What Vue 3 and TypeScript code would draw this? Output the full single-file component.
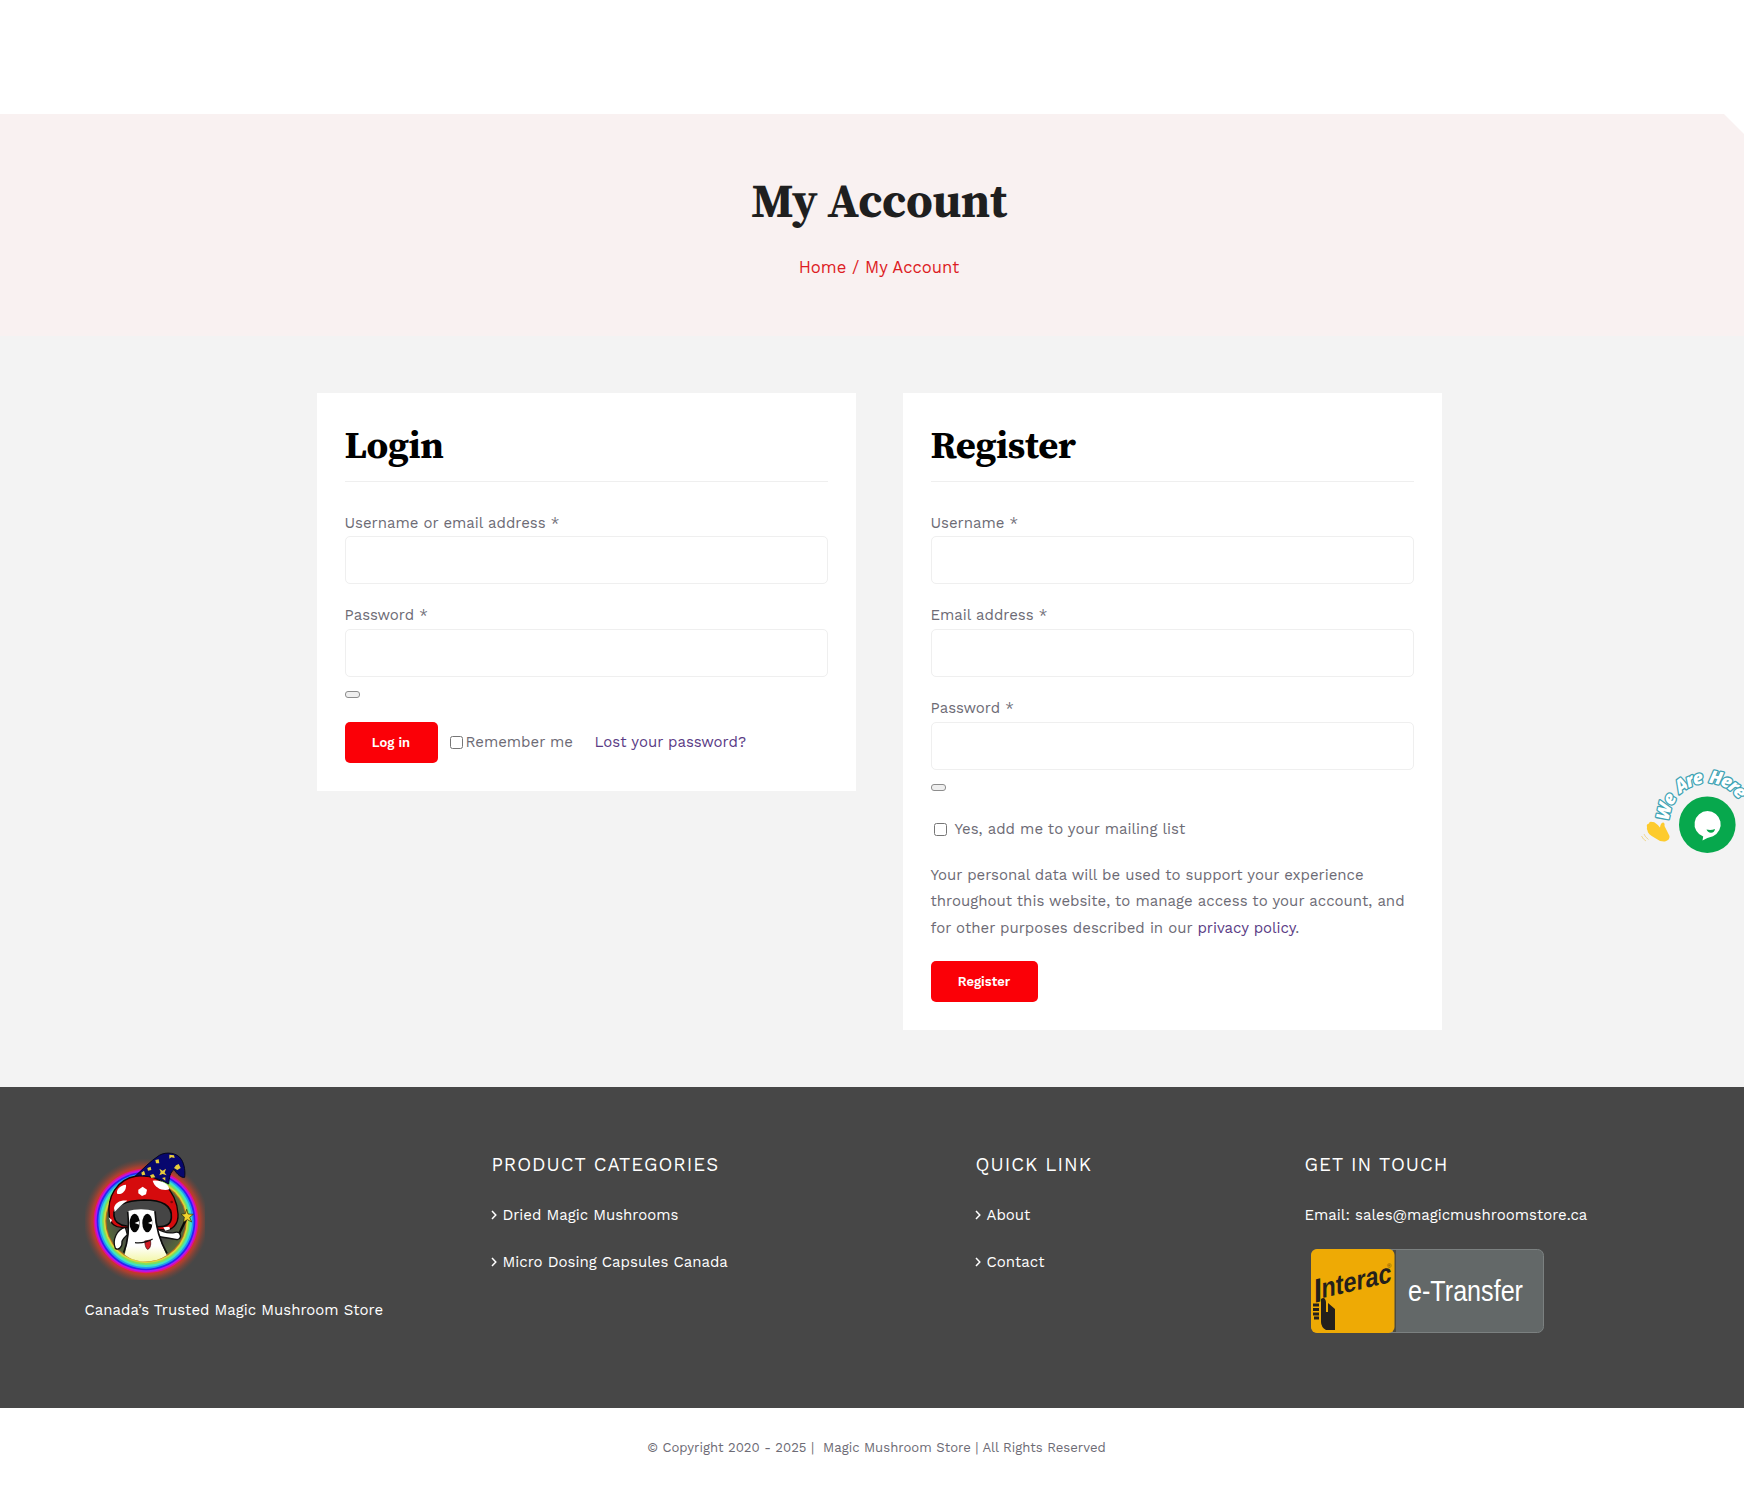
<template>
  <div class="page">
    <header class="site-header"></header>

    <section class="banner">
      <h1 class="banner-title">My Account</h1>
      <nav class="breadcrumb"><a href="#">Home</a> / <span>My Account</span></nav>
      <span class="banner-corner"></span>
    </section>

    <main class="account">
      <form class="card" @submit.prevent>
        <h2 class="card-title">Login</h2>
        <div v-for="field in loginFields" :key="field.id" class="field">
          <label :for="field.id">{{ field.label }} <span>*</span></label>
          <input :id="field.id" v-model="login[field.id]" :type="field.type" />
        </div>
        <button type="button" class="show-password" aria-label="Show password"></button>
        <div class="actions">
          <button type="submit" class="btn btn-login">Log in</button>
          <label class="remember">
            <input v-model="remember" type="checkbox" class="check" />
            <span>Remember me</span>
          </label>
          <a href="#" class="lost">Lost your password?</a>
        </div>
      </form>

      <form class="card" @submit.prevent>
        <h2 class="card-title">Register</h2>
        <div v-for="field in registerFields" :key="field.id" class="field">
          <label :for="field.id">{{ field.label }} <span>*</span></label>
          <input :id="field.id" v-model="register[field.id]" :type="field.type" />
        </div>
        <button type="button" class="show-password" aria-label="Show password"></button>
        <label class="mailing">
          <input v-model="mailing" type="checkbox" class="check" />
          <span>Yes, add me to your mailing list</span>
        </label>
        <p class="privacy">
          Your personal data will be used to support your experience<br />
          throughout this website, to manage access to your account, and<br />
          for other purposes described in our <a href="#">privacy policy</a>.
        </p>
        <button type="submit" class="btn btn-register">Register</button>
      </form>
    </main>

    <footer class="footer">
      <div class="footer-col">
        <svg class="logo" viewBox="45 30 360 390">
          <defs>
            <radialGradient id="glow">
              <stop offset="0.8" stop-color="#f0282a" />
              <stop offset="0.87" stop-color="#b8402c" stop-opacity="0.85" />
              <stop offset="1" stop-color="#7a4436" stop-opacity="0" />
            </radialGradient>
            <radialGradient id="inner">
              <stop offset="0.6" stop-color="#474747" />
              <stop offset="1" stop-color="#55683a" />
            </radialGradient>
            <linearGradient id="stem" x1="0" y1="0" x2="0" y2="1">
              <stop offset="0.7" stop-color="#ffffff" />
              <stop offset="1" stop-color="#f3f7a8" />
            </linearGradient>
          </defs>
          <circle cx="228" cy="243" r="188" fill="url(#glow)" />
          <circle v-for="ring in rings" :key="ring.r" cx="228" cy="243" :r="ring.r" :fill="ring.color" />
          <circle cx="228" cy="243" r="119" fill="url(#inner)" />
          <path d="M166 262C140 268 126 300 136 325C146 332 158 320 156 304C160 292 168 290 172 284Z" fill="#fff" stroke="#111" stroke-width="4" />
          <path d="M258 264C276 276 296 282 316 277C332 274 338 294 322 299C296 294 276 292 262 288Z" fill="#fff" stroke="#111" stroke-width="4" />
          <path d="M328 280L350 234" stroke="#080808" stroke-width="7" />
          <path d="M350 208L354 222L370 223L359 232L365 246L352 239L341 246L343 231L333 223L346 221Z" fill="#f0d52c" stroke="#2b2608" stroke-width="2" />
          <path d="M118 230C110 170 140 118 200 108C262 96 320 150 324 222C326 254 306 270 286 270C262 266 196 266 160 262C136 264 120 250 118 230Z" fill="#d50b0d" stroke="#180404" stroke-width="4" />
          <path d="M132 228C126 196 170 182 222 180C276 180 308 196 304 234C302 254 286 262 258 260L170 258C148 256 134 246 132 228Z" fill="#454545" stroke="#080808" stroke-width="5" />
          <path d="M142 162C136 150 152 134 168 134C170 150 158 164 142 162Z" fill="#fff" />
          <path d="M205 149L218 140L231 149L228 163L216 168L205 160Z" fill="#fff" />
          <path d="M248 122C270 118 296 130 298 148C278 154 254 144 248 122Z" fill="#fff" />
          <path d="M132 204C136 188 150 180 172 182C158 190 146 202 134 216Z" fill="#fff" />
          <path d="M116 232L126 240L122 248Z" fill="#fff" />
          <path d="M280 262L298 260L300 268L286 272Z" fill="#fff" />
          <circle cx="305" cy="186" r="4" fill="#7c0607" />
          <path d="M172 214C196 206 230 206 254 214C256 258 268 300 290 346C250 372 198 370 164 344C176 300 176 258 172 214Z" fill="url(#stem)" />
          <path d="M173 214C178 258 174 306 161 338M255 214C257 258 270 304 291 340" fill="none" stroke="#0c0c0c" stroke-width="5" />
          <ellipse cx="194" cy="249" rx="15" ry="28" fill="#050505" />
          <ellipse cx="232" cy="249" rx="15" ry="28" fill="#050505" />
          <path d="M194 249L208 243L208 254Z" fill="#fff" />
          <path d="M234 249L247 243L247 254Z" fill="#fff" />
          <path d="M224 303L241 300C245 318 238 328 232 328C226 322 225 314 224 303Z" fill="#d31b25" stroke="#3a0508" stroke-width="2" />
          <path d="M195 308C214 310 232 306 248 297" fill="none" stroke="#111" stroke-width="4" />
          <path d="M196 108C216 90 240 64 268 46C288 34 322 38 334 58C344 74 346 96 344 112C334 114 322 104 312 88C300 98 298 112 296 132C266 114 232 106 196 108Z" fill="#07076e" stroke="#05051c" stroke-width="3" />
          <g fill="#e6cc3c">
            <path d="M268 86L278 92L288 86L284 98L290 106L278 102L268 106L272 96Z" />
            <path d="M298 44L312 46L314 54L304 52L298 56Z" />
            <path d="M318 76L326 72L332 84L322 90L312 84Z" />
            <path d="M256 60L266 58L268 70L258 70Z" />
            <path d="M232 84L242 80L244 90L234 92Z" />
            <path d="M214 98L222 92L226 104L216 106Z" />
            <path d="M240 106L250 102L256 112L244 114Z" />
            <path d="M276 114L286 112L286 122Z" />
          </g>
        </svg>
        <p class="tagline">Canada’s Trusted Magic Mushroom Store</p>
      </div>

      <div v-for="col in linkColumns" :key="col.title" class="footer-col">
        <h3>{{ col.title }}</h3>
        <ul>
          <li v-for="link in col.links" :key="link">
            <svg class="chevron" viewBox="0 0 6 10"><path d="M1 1L4.8 5L1 9" /></svg>
            <a href="#">{{ link }}</a>
          </li>
        </ul>
      </div>

      <div class="footer-col">
        <h3>GET IN TOUCH</h3>
        <p class="email">Email: sales@magicmushroomstore.ca</p>
        <svg class="interac" viewBox="0 0 233 84">
          <rect x="0.5" y="0.5" width="232" height="83" rx="6" fill="#636868" stroke="#7b8080" />
          <rect x="82" y="1" width="3" height="82" fill="#4c4a40" />
          <rect x="0" y="0" width="83.500" height="84" rx="6" fill="#eeaa05" />
          <g transform="translate(3 54) skewY(-13)" class="interac-name">
            <text x="0" y="0" font-size="34" textLength="8" lengthAdjust="spacingAndGlyphs">I</text>
            <text x="7.500" y="-3" font-size="28" textLength="70" lengthAdjust="spacingAndGlyphs">nterac</text>
          </g>
          <text x="76" y="19" class="reg">®</text>
          <path d="M10 50Q14 47 15 53L15 63L17 63L17 54L24 60V81H15Q10 78 10 73Z" fill="#241f1c" />
          <path d="M2 56H8M2 60.500H8M2 65H8M3 69H8" stroke="#241f1c" stroke-width="3" />
          <text x="97" y="51.500" class="transfer" textLength="115" lengthAdjust="spacingAndGlyphs">e-Transfer</text>
        </svg>
      </div>
    </footer>

    <div class="copyright">© Copyright 2020 - 2025 |&nbsp; Magic Mushroom Store | All Rights Reserved</div>

    <svg class="chat" viewBox="0 0 120 120">
      <defs>
        <path id="arc" d="M45.300 71A38 38 0 0 1 121.300 71" />
      </defs>
      <text class="chat-text">
        <textPath href="#arc" textLength="97">We Are Here</textPath>
      </text>
      <circle cx="83.300" cy="74.700" r="28.300" fill="#07a84d" />
      <path d="M83.500 61A13.200 13.200 0 0 1 89 86.200Q83 87.500 78.500 90.500L79.200 86.600A13.200 13.200 0 0 1 83.500 61Z" fill="#fff" />
      <path d="M82.500 79.500Q87 80.500 91 79Q90.500 82.700 87 82.700Q83.500 82.500 82.500 79.500Z" fill="#07a84d" />
      <path d="M23 77Q22 74 25 73.500Q25 71 28.500 72Q31 71.500 36 77.500Q36.500 73 39 72.500Q41 72.500 40.500 76Q43 81 45.500 86Q46 90 41 91.500Q36 92 31 88Q23.500 84 23.500 80.500Q22.500 79 23 77Z" fill="#fdcb2d" />
      <path d="M20 84Q21 87 24.500 89.500M17.500 86Q19 89.500 22 91" fill="none" stroke="#ecd489" stroke-width="0.900" />
    </svg>
  </div>
</template>

<script setup lang="ts">
import { reactive, ref } from 'vue';

interface Field {
  id: string;
  label: string;
  type: string;
}

const loginFields: Field[] = [
  { id: 'username', label: 'Username or email address', type: 'text' },
  { id: 'password', label: 'Password', type: 'password' },
];

const registerFields: Field[] = [
  { id: 'reg_username', label: 'Username', type: 'text' },
  { id: 'reg_email', label: 'Email address', type: 'email' },
  { id: 'reg_password', label: 'Password', type: 'password' },
];

const linkColumns = [
  {
    title: 'PRODUCT CATEGORIES',
    links: ['Dried Magic Mushrooms', 'Micro Dosing Capsules Canada'],
  },
  { title: 'QUICK LINK', links: ['About', 'Contact'] },
];

// Rainbow around the logo, drawn from the outside in
const rings = [
  { r: 157, color: '#e0128c' },
  { r: 153, color: '#b316ee' },
  { r: 148, color: '#2a22f0' },
  { r: 143, color: '#1f9bf0' },
  { r: 138, color: '#3fe3c4' },
  { r: 132, color: '#7be060' },
  { r: 127, color: '#d8d63c' },
  { r: 122, color: '#b9671e' },
];

const login = reactive<Record<string, string>>({});
const register = reactive<Record<string, string>>({});
const remember = ref(false);
const mailing = ref(false);
</script>

<style>
body {
  margin: 0;
  overflow: hidden;
}
</style>

<style scoped>
.page {
  position: relative;
  width: 1758px;
  height: 1486px;
  background: #fff;
  color: #6d6b75;
  font-family: "Work Sans", Inter, "Liberation Sans", sans-serif;
  font-size: 15px;
  overflow: hidden;
}

a {
  color: inherit;
  text-decoration: none;
}

.site-header {
  height: 113.500px;
}

.banner {
  position: relative;
  height: 222.500px;
  background: #f9f1f1;
  text-align: center;
  overflow: hidden;
}

.banner-title {
  margin: 0;
  padding-top: 57px;
  font-family: "Source Serif 4", "Source Serif Pro", "Liberation Serif", serif;
  font-size: 47.500px;
  line-height: 60px;
  font-weight: 700;
  letter-spacing: -0.2px;
  color: #1f1f1f;
}

.breadcrumb {
  margin-top: 25px;
  font-size: 16.650px;
  line-height: 24px;
  color: #dd1c24;
}

.banner-corner {
  position: absolute;
  top: 0;
  right: 14px;
  border-top: 20px solid #fff;
  border-left: 20px solid transparent;
}

.account {
  display: flex;
  align-items: flex-start;
  justify-content: center;
  gap: 47px;
  height: 694px;
  padding-top: 57px;
  background: #f3f3f3;
}

.card {
  box-sizing: border-box;
  width: 539px;
  padding: 28px;
  background: #fff;
}

.card-title {
  margin: 0 0 28px;
  padding-bottom: 13px;
  border-bottom: 1px solid #efefef;
  font-family: "Source Serif 4", "Source Serif Pro", "Liberation Serif", serif;
  font-size: 38.500px;
  line-height: 47px;
  font-weight: 700;
  letter-spacing: -0.350px;
  color: #000;
}

.field {
  margin-bottom: 19px;
}

.field label {
  display: block;
  height: 26px;
  line-height: 25.500px;
}

.card-title + .field label {
  line-height: 27px;
}

.field input {
  display: block;
  box-sizing: border-box;
  width: 100%;
  height: 48px;
  border: 1px solid #efefef;
  border-radius: 5px;
  background: #fff;
}

.show-password {
  display: block;
  width: 15px;
  height: 7px;
  margin-top: -5px;
  padding: 0;
  border: 1px solid #8d8d8d;
  border-radius: 3px;
  background: #efefef;
}

.actions {
  display: flex;
  align-items: center;
  margin-top: 24px;
}

.btn {
  display: block;
  height: 41px;
  padding: 0;
  border: 0;
  border-radius: 5px;
  background: #fb0007;
  color: #fff;
  font-family: inherit;
  font-size: 13px;
  font-weight: 600;
}

.btn-login {
  width: 93px;
}

.btn-register {
  width: 107px;
  margin-top: 19.500px;
}

.check {
  width: 13px;
  height: 13px;
  margin: 0;
}

.remember {
  display: flex;
  align-items: center;
  gap: 3px;
  width: 145px;
  margin-left: 12px;
}

.remember span,
.lost {
  padding-bottom: 2px;
}

.lost,
.privacy a {
  color: #5a3b85;
}

.mailing {
  display: flex;
  align-items: center;
  gap: 8px;
  margin: 25px 0 0 3px;
  line-height: 26px;
}

.privacy {
  margin: 19.500px 0 0;
  line-height: 26.800px;
  white-space: nowrap;
}

.footer {
  display: grid;
  grid-template-columns: 407px 484px 329px 1fr;
  box-sizing: border-box;
  height: 320.500px;
  padding: 63px 0 0 84.500px;
  background: #474747;
  color: #fff;
}

.logo {
  display: block;
  width: 120px;
  height: 130px;
}

.tagline {
  margin: 17px 0 0;
  line-height: 26px;
}

.footer h3 {
  margin: 1px 0 23px;
  font-size: 18.650px;
  line-height: 28px;
  font-weight: 400;
  letter-spacing: 1px;
}

.footer ul {
  margin: 0;
  padding: 0;
  list-style: none;
}

.footer li {
  display: flex;
  align-items: center;
  gap: 6px;
  margin: 0 0 21px -1px;
  line-height: 26px;
}

.chevron {
  width: 6px;
  height: 10px;
  fill: none;
  stroke: #fff;
  stroke-width: 1.500;
}

.email {
  margin: 0 0 20.500px;
  line-height: 26px;
}

.interac {
  display: block;
  width: 233px;
  height: 84px;
  margin-left: 6px;
}

.interac-name {
  fill: #241f1c;
  font-family: "Liberation Sans", Arial, sans-serif;
  font-weight: 700;
}

.reg {
  fill: #5a430c;
  font-family: "Liberation Sans", Arial, sans-serif;
  font-size: 6px;
}

.transfer {
  fill: #fff;
  font-family: "Liberation Sans", Arial, sans-serif;
  font-size: 30px;
}

.copyright {
  padding: 27px 5px 0 0;
  text-align: center;
  font-size: 13.150px;
  line-height: 26px;
}

.chat {
  position: absolute;
  left: 1624px;
  top: 750px;
  width: 120px;
  height: 120px;
}

.chat-text {
  fill: #fff;
  stroke: #3fa3b4;
  stroke-width: 2.600px;
  stroke-linejoin: round;
  paint-order: stroke;
  font-family: "Open Sans", Lato, sans-serif;
  font-size: 18px;
  font-weight: 800;
  font-style: italic;
  word-spacing: 3px;
}
</style>
